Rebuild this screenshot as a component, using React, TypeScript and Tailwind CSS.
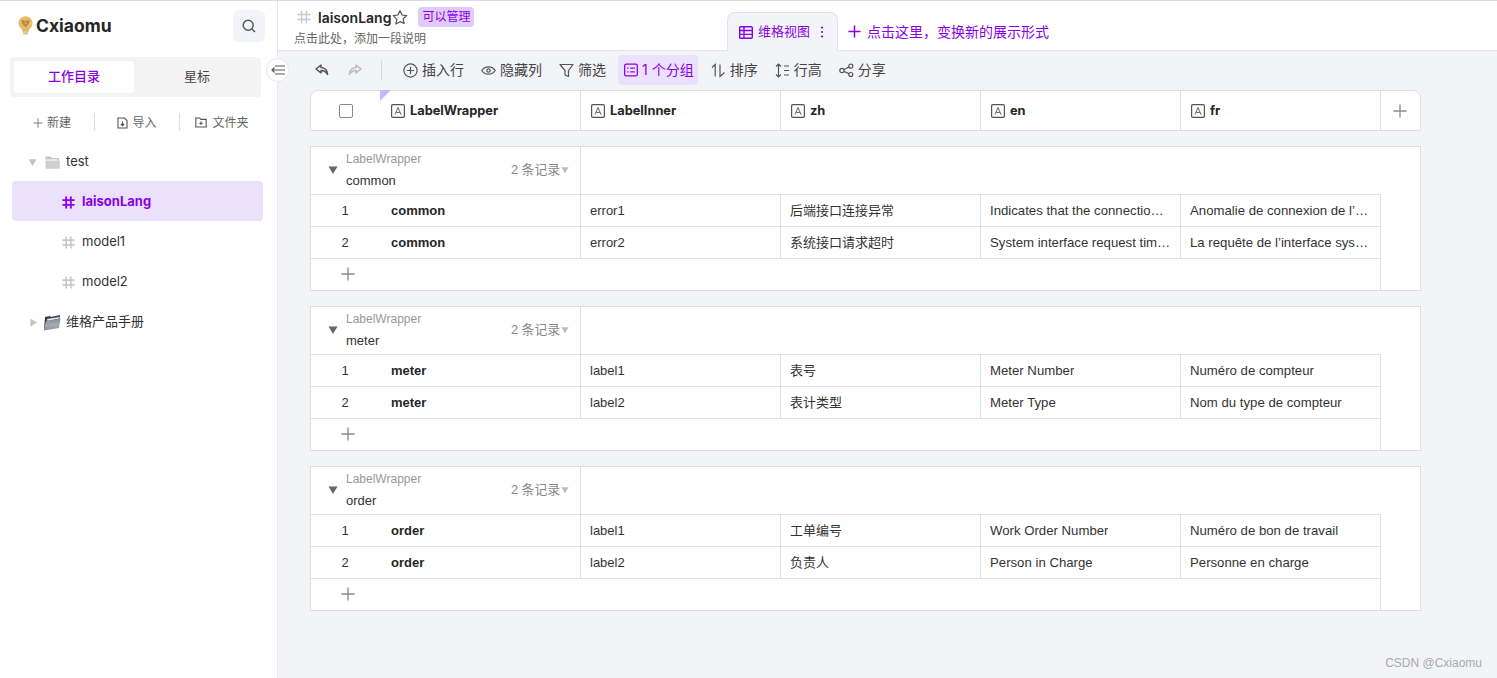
import React from "react";

const INTER = "font-['Inter','Noto_Sans_CJK_SC',sans-serif]";
const LIB = "font-['Liberation_Sans','Noto_Sans_CJK_SC',sans-serif]";

function Hash({ color = "#c9c9c9", size = 14, w = 1.6 }: { color?: string; size?: number; w?: number }) {
  return (
    <svg width={size} height={size} viewBox="0 0 14 14" fill="none" stroke={color} strokeWidth={w} className="shrink-0">
      <path d="M4.5 0.5V13.5M9.5 0.5V13.5M0.5 4.5H13.5M0.5 9.5H13.5" />
    </svg>
  );
}

function Tri({ dir, color, size }: { dir: "down" | "right"; color: string; size: number }) {
  return (
    <svg width={size} height={size} viewBox="0 0 10 10" fill={color} className="shrink-0">
      {dir === "down" ? <path d="M0.5 1.5H9.5L5 9Z" /> : <path d="M1.5 0.5V9.5L9 5Z" />}
    </svg>
  );
}

function PlusIcon({ color = "#888", size = 14, w = 1.3 }: { color?: string; size?: number; w?: number }) {
  return (
    <svg width={size} height={size} viewBox="0 0 14 14" fill="none" stroke={color} strokeWidth={w} className="shrink-0">
      <path d="M7 0.5V13.5M0.5 7H13.5" />
    </svg>
  );
}

function Logo() {
  return (
    <svg width="15" height="20" viewBox="0 0 15 20" className="shrink-0">
      <circle cx="7.5" cy="7.3" r="7" fill="#e6bd6c" />
      <path d="M3.4 4.6C5 3.7 6.6 4.2 7.5 5.4 8.4 4.2 10 3.7 11.6 4.6L10.6 8 7.5 11.4 4.4 8Z" fill="#b98a35" />
      <path d="M6 5.6L7.5 9 9 5.6 7.5 7Z" fill="#e6bd6c" />
      <rect x="4" y="13.2" width="7" height="2.6" rx="0.8" fill="#e0b565" />
      <rect x="4.8" y="16.2" width="5.4" height="2.2" rx="0.8" fill="#e3bd75" />
    </svg>
  );
}

function GreyFolder() {
  return (
    <svg width="15" height="13" viewBox="0 0 15 13" className="shrink-0">
      <path d="M0.5 1.5C0.5 0.9 0.9 0.5 1.5 0.5H5.5L7 2H13C13.6 2 14 2.4 14 3V4H0.5Z" fill="#c4c4c4" />
      <path d="M0.5 4.5L14.8 4.2V12C14.8 12.5 14.4 12.8 14 12.8H1.3C0.8 12.8 0.5 12.5 0.5 12Z" fill="#cfcfcf" />
      <path d="M1.5 3.2H12.5V4.4H1.5Z" fill="#efefef" />
    </svg>
  );
}

function DarkFolder() {
  return (
    <svg width="18" height="17" viewBox="0 0 18 17" className="shrink-0">
      <defs>
        <linearGradient id="fold" x1="0" y1="0" x2="0" y2="1">
          <stop offset="0" stopColor="#7f8ea3" />
          <stop offset="0.55" stopColor="#a9abae" />
          <stop offset="1" stopColor="#8d8e90" />
        </linearGradient>
      </defs>
      <path d="M2 3L7 2 8 3 17 1 15.5 13 1 16Z" fill="#2f3e58" />
      <path d="M4 5L16.5 3 16 4.5 4.5 7Z" fill="#e9e9e9" />
      <path d="M3 7L17.5 4.5 16 14 0.8 16.4Z" fill="url(#fold)" />
    </svg>
  );
}

function TextFieldIcon() {
  return (
    <svg width="14" height="14" viewBox="0 0 14 14" fill="none" stroke="#555" className="shrink-0">
      <rect x="0.6" y="0.6" width="12.8" height="12.8" rx="1.2" strokeWidth="1.2" />
      <path d="M4 10.6L7 3.4 10 10.6M5 8.4H9" strokeWidth="0.9" />
    </svg>
  );
}

function Undo({ color, flip }: { color: string; flip?: boolean }) {
  return (
    <svg width="14" height="12" viewBox="0 0 14 12" fill="none" stroke={color} strokeWidth="1.5" strokeLinejoin="round" className={flip ? "-scale-x-100" : ""}>
      <path d="M6 1L1 5 6 8.8V6.4C8.8 6.2 11 7.6 12.6 10.4 12.6 6.4 10 3.6 6 3.4Z" />
    </svg>
  );
}

const ic = { width: 15, height: 15, viewBox: "0 0 15 15", fill: "none", stroke: "#555", strokeWidth: 1.2, className: "shrink-0" };

function Tool({ icon, label }: { icon: React.ReactNode; label: string }) {
  return (
    <div className="flex items-center gap-[4px] text-[14px] leading-none text-[#444]">
      {icon}
      <span>{label}</span>
    </div>
  );
}

function Toolbar() {
  return (
    <div className={`h-[39px] shrink-0 flex items-center pl-[37px] pb-[1px] ${INTER}`}>
      <Undo color="#555" />
      <div className="ml-[19px]">
        <Undo color="#bbb" flip />
      </div>
      <div className="ml-[19px] mr-[21px] w-px h-[20px] bg-[#d9d9d9]" />
      <div className="flex items-center gap-[17px]">
        <Tool
          label="插入行"
          icon={
            <svg {...ic}>
              <circle cx="7.5" cy="7.5" r="6.6" />
              <path d="M7.5 3.8V11.2M3.8 7.5H11.2" />
            </svg>
          }
        />
        <Tool
          label="隐藏列"
          icon={
            <svg {...ic}>
              <path d="M0.8 7.5C3.8 2.6 11.2 2.6 14.2 7.5 11.2 12.4 3.8 12.4 0.8 7.5Z" />
              <circle cx="7.5" cy="7.5" r="1.7" />
            </svg>
          }
        />
        <Tool
          label="筛选"
          icon={
            <svg {...ic}>
              <path d="M1 1.5H14L9.5 7.5V13.5L6 12V7.5Z" strokeLinejoin="round" />
            </svg>
          }
        />
        <div className="-ml-[5px] -mr-[4px] h-[30px] pl-[6px] pr-[4px] rounded bg-[#ebe1fd] flex items-center gap-[4px] text-[14px] leading-none text-[#8a00e6]">
          <svg width="14" height="14" viewBox="0 0 14 14" fill="none" stroke="#8a00e6" strokeWidth="1.3" className="shrink-0">
            <rect x="0.7" y="1.2" width="12.6" height="11.6" rx="1.4" />
            <path d="M3.2 5.2H4.6M6.2 5.2H10.8M3.2 8.8H4.6M6.2 8.8H10.8" />
          </svg>
          <span>1 个分组</span>
        </div>
        <Tool
          label="排序"
          icon={
            <svg {...ic}>
              <path d="M1 4.5L4.2 1.5V13.5M9 1.5V13.5L13.5 9.5" />
            </svg>
          }
        />
        <Tool
          label="行高"
          icon={
            <svg {...ic}>
              <path d="M3.5 1V14M1 3.5L3.5 1 6 3.5M1 11.5L3.5 14 6 11.5M9 3H14M9 7.5H14M9 12H14" />
            </svg>
          }
        />
        <Tool
          label="分享"
          icon={
            <svg {...ic}>
              <circle cx="3" cy="7.5" r="2.2" />
              <circle cx="11.8" cy="3.2" r="2" />
              <circle cx="11.8" cy="11.5" r="2" />
              <path d="M5 6.5L10 4M5 8.5L10 10.6" />
            </svg>
          }
        />
      </div>
    </div>
  );
}

function Sidebar() {
  return (
    <aside className={`relative w-[278px] shrink-0 bg-white border-r border-[#e6e6f2] ${INTER}`}>
      <div className="h-[50px] pl-[18px] pr-[12px] flex items-center justify-between">
        <div className="flex items-center gap-[3px]">
          <Logo />
          <span className="text-[17.5px] leading-[24px] font-bold text-[#262626]">Cxiaomu</span>
        </div>
        <div className="w-[32px] h-[32px] rounded-md bg-[#f3f4f8] flex items-center justify-center">
          <svg width="14" height="14" viewBox="0 0 14 14" fill="none" stroke="#555" strokeWidth="1.4">
            <circle cx="6.2" cy="6.2" r="5" />
            <path d="M10 10L13 13" />
          </svg>
        </div>
      </div>
      <div className="mt-[6px] ml-[10px] w-[251px] h-[40px] p-[4px] rounded bg-[#f3f3f3] flex text-[13px]">
        <div className="w-[120px] rounded bg-white text-[#8a00e6] font-medium flex items-center justify-center">工作目录</div>
        <div className="flex-1 pl-[3px] text-[#444] flex items-center justify-center">星标</div>
      </div>
      <div className="mt-[16px] ml-[10px] h-[18px] flex items-center text-[12px] text-[#666]">
        <div className="w-[84px] pt-[1px] flex items-center justify-center gap-[4px]">
          <PlusIcon size={10} color="#777" />
          <span>新建</span>
        </div>
        <div className="w-px h-[18px] bg-[#dcdce4]" />
        <div className="w-[84px] pt-[1px] flex items-center justify-center gap-[4px]">
          <svg width="11" height="12" viewBox="0 0 11 12" fill="none" stroke="#555" strokeWidth="1.1">
            <path d="M1 1H7.5L10 3.5V11H1Z" />
            <path d="M5.5 4.5V8.5M3.8 7L5.5 8.7 7.2 7" />
          </svg>
          <span>导入</span>
        </div>
        <div className="w-px h-[18px] bg-[#dcdce4]" />
        <div className="w-[84px] pt-[1px] flex items-center justify-center gap-[5px]">
          <svg width="12" height="11" viewBox="0 0 12 11" fill="none" stroke="#555" strokeWidth="1.1">
            <path d="M0.8 1H4.6L5.8 2.4H11.2V10H0.8Z" />
            <path d="M6 4.4V8M4.2 6.2H7.8" />
          </svg>
          <span>文件夹</span>
        </div>
      </div>
      <div className="mt-[10px] ml-[12px] w-[251px] text-[13px] text-[#333]">
        <div className="h-[40px] pt-[2px] pl-[16px] flex items-center">
          <Tri dir="down" color="#c4c4c4" size={9} />
          <div className="ml-[8px] mr-[7px]">
            <GreyFolder />
          </div>
          <span className="-ml-px">test</span>
        </div>
        <div className="h-[40px] pt-[2px] pl-[50px] flex items-center gap-[7px] rounded bg-[#ebe1fd] text-[#8a00e6] font-bold">
          <Hash color="#8a00e6" size={13} w={2} />
          <span>laisonLang</span>
        </div>
        <div className="h-[40px] pt-[2px] pl-[50px] flex items-center gap-[7px]">
          <Hash size={13} w={1.8} />
          <span>model1</span>
        </div>
        <div className="h-[40px] pt-[2px] pl-[50px] flex items-center gap-[7px]">
          <Hash size={13} w={1.8} />
          <span>model2</span>
        </div>
        <div className="h-[40px] pt-[2px] pl-[17px] flex items-center">
          <Tri dir="right" color="#c4c4c4" size={9} />
          <div className="ml-[5px] mr-[5px]">
            <DarkFolder />
          </div>
          <span>维格产品手册</span>
        </div>
      </div>
      <div className="absolute left-[266px] top-[57px] z-10 w-[23px] h-[24px] rounded-full bg-white border border-[#e6e6f2] flex items-center justify-center">
        <svg width="14" height="10" viewBox="0 0 14 10" fill="none" stroke="#555" strokeWidth="1.2">
          <path d="M4 1H14M1 5H14M4 9H14M3.5 2.5L1 5 3.5 7.5" />
        </svg>
      </div>
    </aside>
  );
}

function Header() {
  return (
    <div className={`h-[50px] shrink-0 bg-white border-b border-[#e3e3f0] flex ${INTER}`}>
      <div className="w-[449px] shrink-0 pl-[16px]">
        <div className="mt-[5px] h-[22px] flex items-center">
          <div className="ml-[3px] mr-[7px]">
            <Hash size={14} w={1.3} />
          </div>
          <span className="text-[14px] font-semibold text-[#262626]">laisonLang</span>
          <svg width="16" height="16" viewBox="0 0 24 24" fill="none" stroke="#555" strokeWidth="1.8" strokeLinejoin="round" className="ml-px">
            <path d="M12 2.5L15 9l7 .8-5.2 4.8 1.4 7L12 19l-6.2 3.6 1.4-7L2 9.8 9 9Z" />
          </svg>
          <span className="ml-[10px] h-[20px] w-[56px] rounded-sm bg-[#e0ccfb] text-[12px] text-[#8a00e6] flex items-center justify-center">可以管理</span>
        </div>
        <div className="mt-[2px] text-[12px] leading-[18px] text-[#666]">点击此处，添加一段说明</div>
      </div>
      <div className="self-end -mb-px h-[39px] w-[111px] rounded-t-lg bg-[#f3f4f8] border border-b-0 border-[#e3dff5] flex items-center pl-[11px] text-[13px] text-[#8a00e6] z-10">
        <svg width="14" height="13" viewBox="0 0 14 13" fill="none" stroke="#8a00e6" strokeWidth="1.4" className="shrink-0">
          <rect x="0.7" y="0.7" width="12.6" height="11.6" rx="1" />
          <path d="M0.7 4.5H13.3M0.7 8.4H13.3M5 0.7V12.3" />
        </svg>
        <span className="ml-[5px]">维格视图</span>
        <svg width="4" height="12" viewBox="0 0 4 12" fill="#8a00e6" className="ml-[10px] shrink-0">
          <circle cx="2" cy="1.5" r="1.1" />
          <circle cx="2" cy="6" r="1.1" />
          <circle cx="2" cy="10.5" r="1.1" />
        </svg>
      </div>
      <div className="ml-[10px] self-center mt-[12px] flex items-center gap-[6px] text-[14px] text-[#8a00e6]">
        <PlusIcon color="#8a00e6" size={13} w={1.6} />
        <span>点击这里，变换新的展示形式</span>
      </div>
    </div>
  );
}

function TableHead() {
  const cols = ["LabelInner", "zh", "en", "fr"];
  return (
    <div className={`relative w-[1111px] h-[41px] bg-white border border-[#dfdfdf] rounded-t-lg flex ${INTER}`}>
      <div className="w-[270px] h-full border-r border-[#dfdfdf] flex items-center">
        <div className="ml-[28px] w-[14px] h-[14px] rounded-[2px] border border-[#888]" />
        <div className="ml-[38px] flex items-center gap-[5px]">
          <TextFieldIcon />
          <span className="text-[12.8px] font-bold text-[#262626]">LabelWrapper</span>
        </div>
      </div>
      {cols.map((c) => (
        <div key={c} className="w-[200px] h-full border-r border-[#dfdfdf] pl-[10px] flex items-center gap-[5px]">
          <TextFieldIcon />
          <span className="text-[12.8px] font-bold text-[#262626]">{c}</span>
        </div>
      ))}
      <div className="flex-1 pr-[2px] flex items-center justify-center">
        <PlusIcon size={14} color="#888" />
      </div>
      <svg width="11" height="11" viewBox="0 0 11 11" className="absolute left-[69px] -top-px">
        <path d="M0 0H11L0 11Z" fill="#c6b8fb" />
      </svg>
    </div>
  );
}

type Row = [string, string, string, string, string];

function Group({ name, rows }: { name: string; rows: Row[] }) {
  return (
    <div className={`mt-[15px] w-[1111px] h-[145px] bg-white border border-[#dfdfdf] ${LIB}`}>
      <div className="w-[270px] h-[48px] pb-[3px] border-r border-[#dfdfdf] flex items-center">
        <div className="ml-[17px]">
          <Tri dir="down" color="#666" size={10} />
        </div>
        <div className="ml-[8px] flex flex-col">
          <span className="text-[12px] leading-[16px] text-[#999]">LabelWrapper</span>
          <span className="mt-[5px] text-[13px] leading-[17px] text-[#333]">{name}</span>
        </div>
        <div className="ml-auto mr-[11px] flex items-center gap-px text-[12.8px] text-[#888]">
          <span>2 条记录</span>
          <Tri dir="down" color="#bbb" size={8} />
        </div>
      </div>
      <div className="w-[1070px] h-[96px] border-t border-r border-[#dfdfdf] -mt-px">
        {rows.map((r, i) => (
          <div key={i} className="h-[32px] flex border-b border-[#dfdfdf] text-[13px] text-[#333]">
            <div className="w-[270px] shrink-0 border-r border-[#dfdfdf] flex items-center">
              <span className="w-[68px] text-center">{i + 1}</span>
              <span className="ml-[12px] font-bold text-[#262626]">{r[0]}</span>
            </div>
            {r.slice(1).map((c, j) => (
              <div key={j} className={`shrink-0 pl-[9px] pr-[9px] flex items-center min-w-0 ${j < 3 ? "w-[200px] border-r border-[#dfdfdf]" : "w-[199px]"} ${j > 1 ? "text-[13.2px]" : ""}`}>
                <span className="truncate">{c}</span>
              </div>
            ))}
          </div>
        ))}
        <div className="h-[31px] pb-[2px] flex items-center pl-[30px]">
          <PlusIcon size={14} color="#888" />
        </div>
      </div>
    </div>
  );
}

export default function App() {
  return (
    <div className="relative w-full h-screen overflow-hidden border-t border-[#dcdcdc] flex bg-[#f3f4f8]">
      <Sidebar />
      <main className="flex-1 min-w-0 flex flex-col">
        <Header />
        <Toolbar />
        <div className="pl-[32px]">
          <TableHead />
          <Group
            name="common"
            rows={[
              ["common", "error1", "后端接口连接异常", "Indicates that the connection to the backend failed", "Anomalie de connexion de l’interface backend"],
              ["common", "error2", "系统接口请求超时", "System interface request timed out", "La requête de l’interface système a expiré"],
            ]}
          />
          <Group
            name="meter"
            rows={[
              ["meter", "label1", "表号", "Meter Number", "Numéro de compteur"],
              ["meter", "label2", "表计类型", "Meter Type", "Nom du type de compteur"],
            ]}
          />
          <Group
            name="order"
            rows={[
              ["order", "label1", "工单编号", "Work Order Number", "Numéro de bon de travail"],
              ["order", "label2", "负责人", "Person in Charge", "Personne en charge"],
            ]}
          />
        </div>
      </main>
      <div className={`absolute right-[15px] top-[654px] text-[12px] leading-[16px] text-[#aaa] ${LIB}`}>CSDN @Cxiaomu</div>
    </div>
  );
}
